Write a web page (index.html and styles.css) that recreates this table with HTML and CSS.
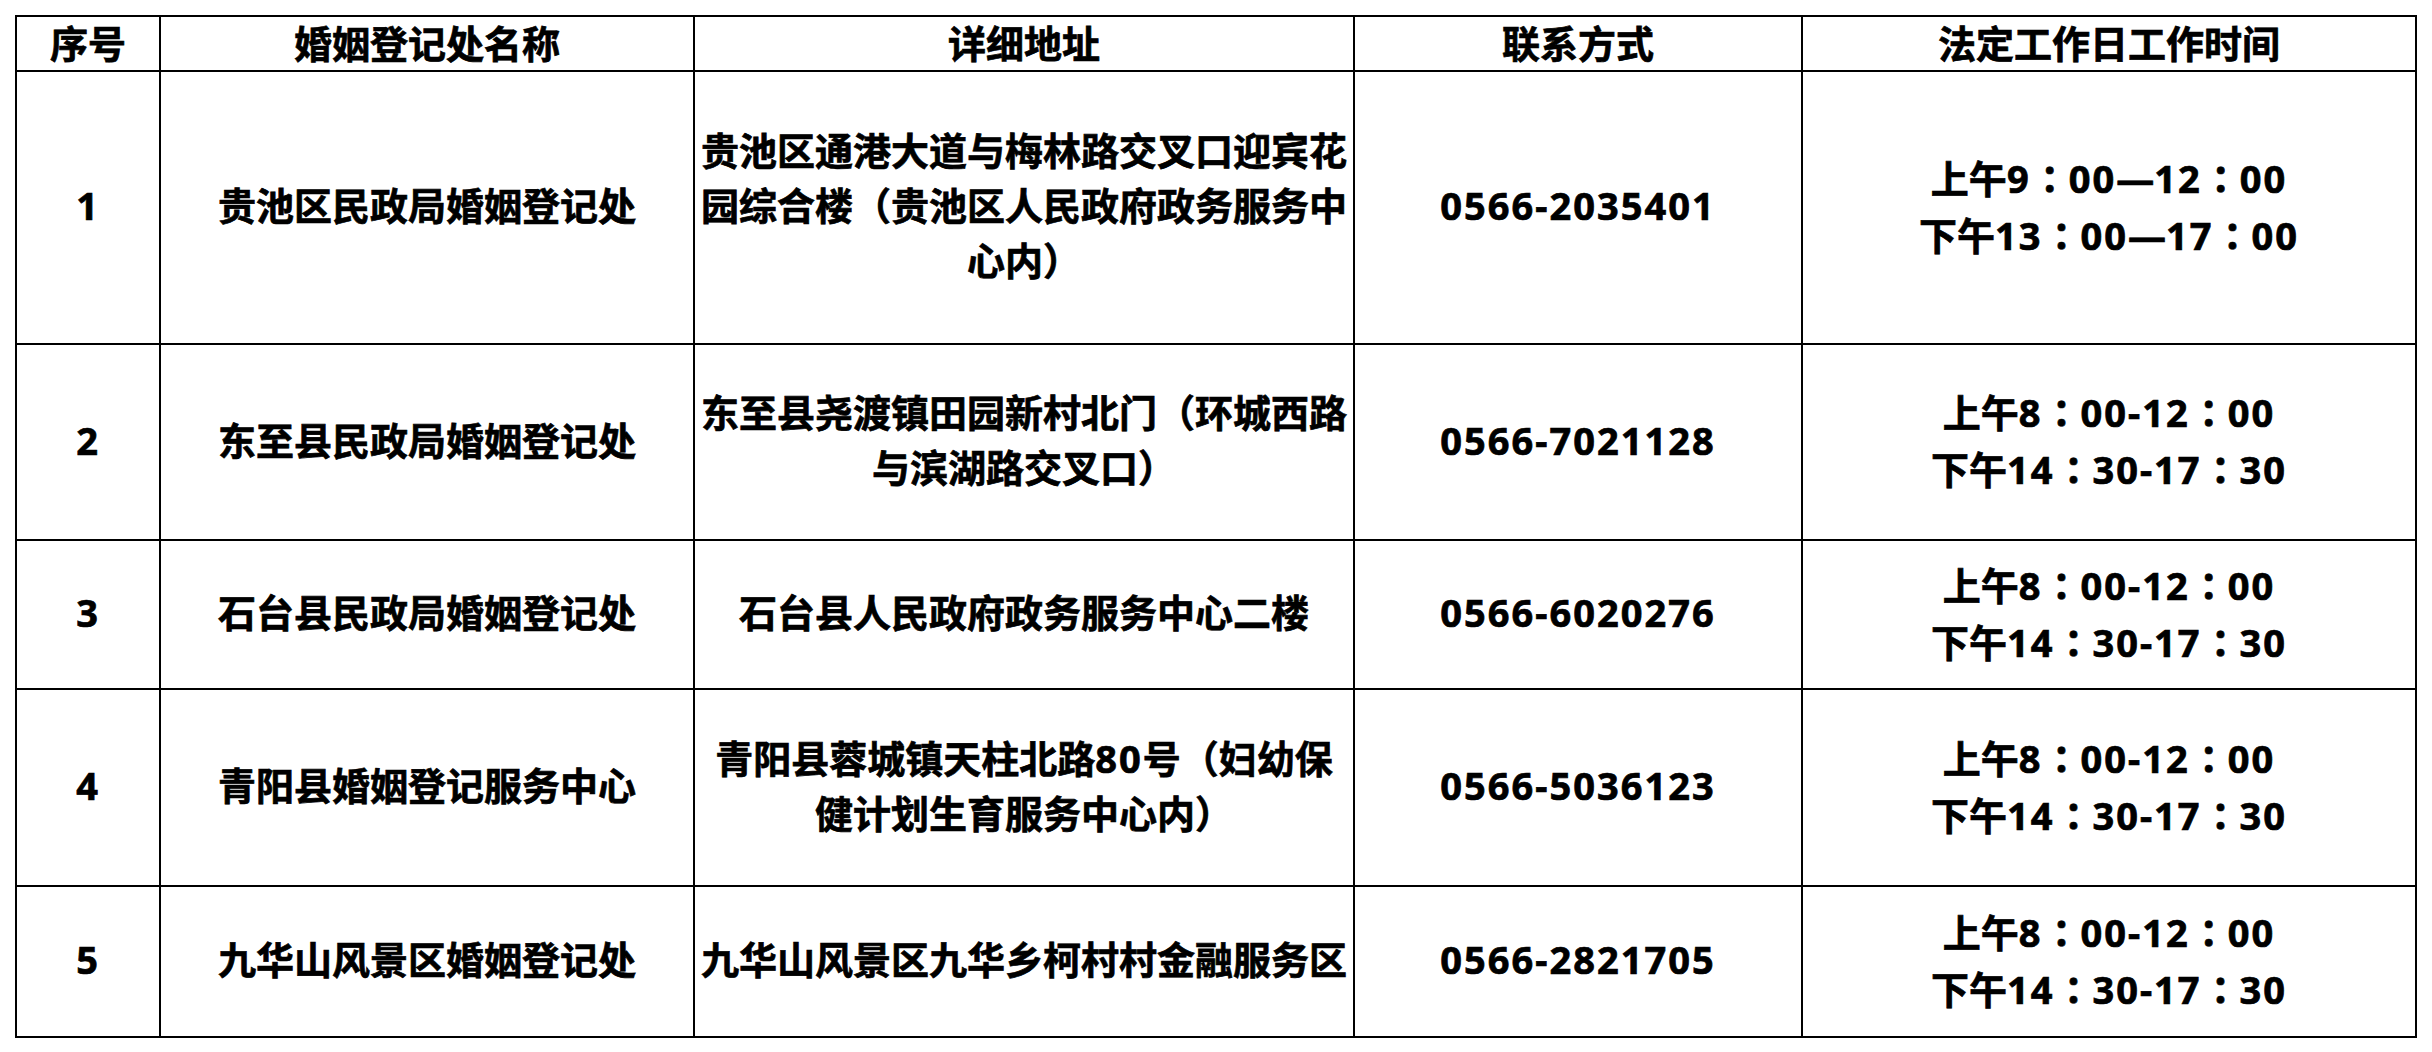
FILE: index.html
```html
<!DOCTYPE html>
<html lang="zh-CN">
<head>
<meta charset="utf-8">
<title>婚姻登记处信息</title>
<link rel="stylesheet" href="styles.css">
</head>
<body>
<div class="sheet">
  <div class="cell head"><p class="t">序号</p></div>
  <div class="cell head"><p class="t">婚姻登记处名称</p></div>
  <div class="cell head"><p class="t">详细地址</p></div>
  <div class="cell head"><p class="t">联系方式</p></div>
  <div class="cell head"><p class="t">法定工作日工作时间</p></div>

  <div class="cell"><p class="t"><span class="num">1</span></p></div>
  <div class="cell"><p class="t">贵池区民政局婚姻登记处</p></div>
  <div class="cell"><p class="t">贵池区通港大道与梅林路交叉口迎宾花<br>园综合楼（贵池区人民政府政务服务中<br>心内）</p></div>
  <div class="cell"><p class="t"><span class="num">0566-2035401</span></p></div>
  <div class="cell"><p class="t">上午<span class="num">9</span><span class="c" lang="zh-TW">：</span><span class="num">00</span>—<span class="num">12</span><span class="c" lang="zh-TW">：</span><span class="num">00</span><br>下午<span class="num">13</span><span class="c" lang="zh-TW">：</span><span class="num">00</span>—<span class="num">17</span><span class="c" lang="zh-TW">：</span><span class="num">00</span></p></div>

  <div class="cell"><p class="t"><span class="num">2</span></p></div>
  <div class="cell"><p class="t">东至县民政局婚姻登记处</p></div>
  <div class="cell"><p class="t">东至县尧渡镇田园新村北门（环城西路<br>与滨湖路交叉口）</p></div>
  <div class="cell"><p class="t"><span class="num">0566-7021128</span></p></div>
  <div class="cell"><p class="t">上午<span class="num">8</span><span class="c" lang="zh-TW">：</span><span class="num">00-12</span><span class="c" lang="zh-TW">：</span><span class="num">00</span><br>下午<span class="num">14</span><span class="c" lang="zh-TW">：</span><span class="num">30-17</span><span class="c" lang="zh-TW">：</span><span class="num">30</span></p></div>

  <div class="cell"><p class="t"><span class="num">3</span></p></div>
  <div class="cell"><p class="t">石台县民政局婚姻登记处</p></div>
  <div class="cell"><p class="t">石台县人民政府政务服务中心二楼</p></div>
  <div class="cell"><p class="t"><span class="num">0566-6020276</span></p></div>
  <div class="cell"><p class="t">上午<span class="num">8</span><span class="c" lang="zh-TW">：</span><span class="num">00-12</span><span class="c" lang="zh-TW">：</span><span class="num">00</span><br>下午<span class="num">14</span><span class="c" lang="zh-TW">：</span><span class="num">30-17</span><span class="c" lang="zh-TW">：</span><span class="num">30</span></p></div>

  <div class="cell"><p class="t"><span class="num">4</span></p></div>
  <div class="cell"><p class="t">青阳县婚姻登记服务中心</p></div>
  <div class="cell"><p class="t">青阳县蓉城镇天柱北路<span class="num">80</span>号（妇幼保<br>健计划生育服务中心内）</p></div>
  <div class="cell"><p class="t"><span class="num">0566-5036123</span></p></div>
  <div class="cell"><p class="t">上午<span class="num">8</span><span class="c" lang="zh-TW">：</span><span class="num">00-12</span><span class="c" lang="zh-TW">：</span><span class="num">00</span><br>下午<span class="num">14</span><span class="c" lang="zh-TW">：</span><span class="num">30-17</span><span class="c" lang="zh-TW">：</span><span class="num">30</span></p></div>

  <div class="cell"><p class="t"><span class="num">5</span></p></div>
  <div class="cell"><p class="t">九华山风景区婚姻登记处</p></div>
  <div class="cell"><p class="t">九华山风景区九华乡柯村村金融服务区</p></div>
  <div class="cell"><p class="t"><span class="num">0566-2821705</span></p></div>
  <div class="cell"><p class="t">上午<span class="num">8</span><span class="c" lang="zh-TW">：</span><span class="num">00-12</span><span class="c" lang="zh-TW">：</span><span class="num">00</span><br>下午<span class="num">14</span><span class="c" lang="zh-TW">：</span><span class="num">30-17</span><span class="c" lang="zh-TW">：</span><span class="num">30</span></p></div>
</div>
</body>
</html>
```

FILE: styles.css
```css
html, body {
  margin: 0;
  padding: 0;
  background: #ffffff;
}

body {
  padding: 15px 0 0 15px;
  font-family: "Noto Sans", "Noto Sans CJK SC", sans-serif;
  font-weight: 700;
  font-size: 38px;
  color: #000000;
}

.sheet {
  display: grid;
  grid-template-columns: 142px 532px 658px 446px 612px;
  grid-template-rows: 53px 271px 194px 147px 195px 149px;
  gap: 2px;
  padding: 2px;
  background: #000000;
  width: max-content;
}

.cell {
  background: #ffffff;
  display: flex;
  align-items: center;
  justify-content: center;
  padding: 0 4px 4px;
  overflow: hidden;
}

.cell.head {
  padding-bottom: 0;
}

.t {
  margin: 0;
  text-align: center;
  line-height: 55px;
  white-space: nowrap;
  -webkit-text-stroke: 0.7px #000000;
}

.head .t {
  line-height: 53px;
}

.num {
  letter-spacing: 2px;
}

.c {
  font-family: "Noto Sans CJK TC", "Noto Sans CJK SC", sans-serif;
}
```
